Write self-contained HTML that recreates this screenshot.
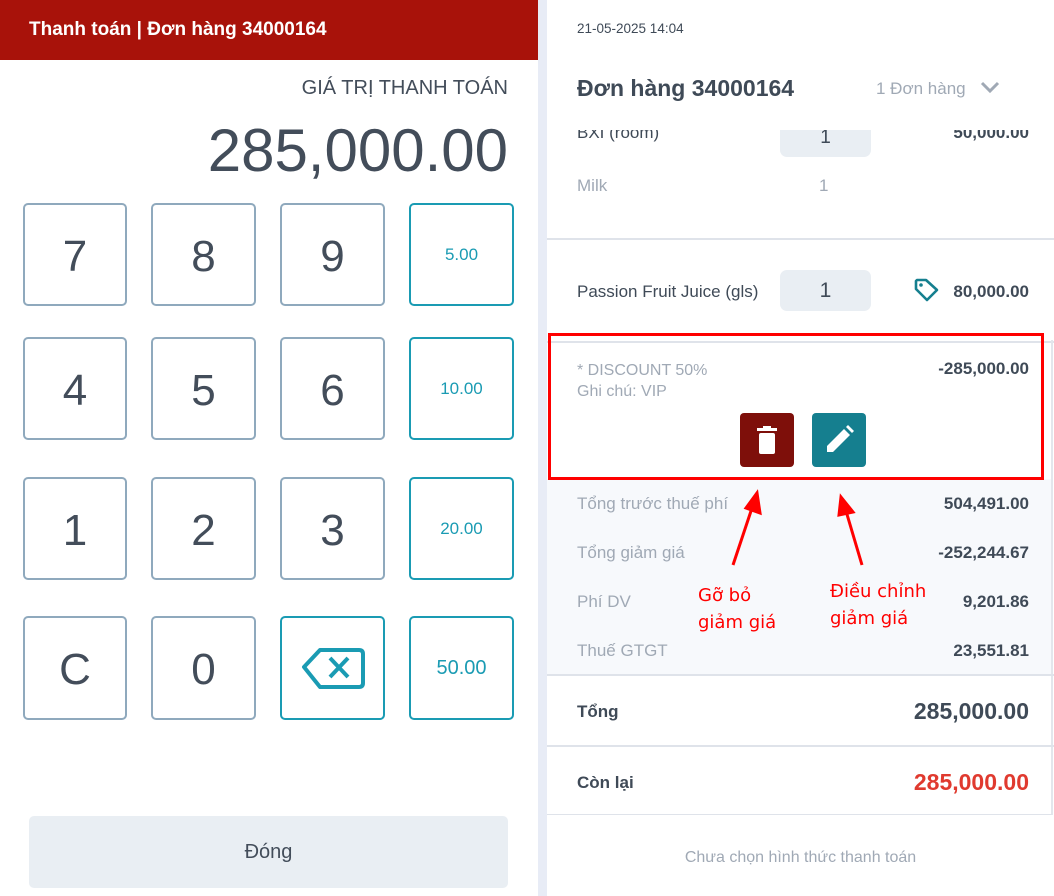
<!DOCTYPE html>
<html><head><meta charset="utf-8"><style>
*{margin:0;padding:0;box-sizing:border-box}
body{width:1054px;height:896px;position:relative;background:#e8ecf6;font-family:"Liberation Sans","DejaVu Sans",sans-serif;overflow:hidden;color:#3f4a57}
.a{position:absolute}
.k{position:absolute;border:2px solid #8fa9bd;border-radius:5px;background:#fff;display:flex;align-items:center;justify-content:center;font-size:44px;color:#434d5a;padding-top:4px}
.t{border-color:#1a9bb3;color:#1a9bb3;font-size:17px;padding-top:0}
.r{white-space:nowrap}
</style></head><body>
<div class="a" style="left:0;top:0;width:538px;height:896px;background:#fff"></div>
<div class="a" style="left:0;top:0;width:538px;height:60px;background:#a8120a"></div>
<div class="a r" style="left:29px;top:19px;color:#fff;font-weight:bold;font-size:19px">Thanh toán | Đơn hàng 34000164</div>
<div class="a r" style="right:546px;top:77px;font-size:20px;color:#434d5a">GIÁ TRỊ THANH TOÁN</div>
<div class="a r" style="right:546px;top:116px;font-size:60px;color:#434d5a">285,000.00</div>

<div class="k" style="left:23px;top:203px;width:104px;height:103px">7</div>
<div class="k" style="left:151px;top:203px;width:105px;height:103px">8</div>
<div class="k" style="left:280px;top:203px;width:105px;height:103px">9</div>
<div class="k t" style="left:409px;top:203px;width:105px;height:103px">5.00</div>
<div class="k" style="left:23px;top:337px;width:104px;height:103px">4</div>
<div class="k" style="left:151px;top:337px;width:105px;height:103px">5</div>
<div class="k" style="left:280px;top:337px;width:105px;height:103px">6</div>
<div class="k t" style="left:409px;top:337px;width:105px;height:103px">10.00</div>
<div class="k" style="left:23px;top:477px;width:104px;height:103px">1</div>
<div class="k" style="left:151px;top:477px;width:105px;height:103px">2</div>
<div class="k" style="left:280px;top:477px;width:105px;height:103px">3</div>
<div class="k t" style="left:409px;top:477px;width:105px;height:103px">20.00</div>
<div class="k" style="left:23px;top:616px;width:104px;height:104px">C</div>
<div class="k" style="left:151px;top:616px;width:105px;height:104px">0</div>
<div class="k t" style="left:280px;top:616px;width:105px;height:104px"><svg width="64" height="48" viewBox="0 0 64 48"><path d="M3 23 L19 6 H58 Q62 6 62 10 V39 Q62 43 58 43 H19 Z" fill="none" stroke="#1a9bb3" stroke-width="4" stroke-linejoin="round"/><path d="M29 14 L47 33 M47 14 L29 33" stroke="#1a9bb3" stroke-width="4"/></svg></div>
<div class="k t" style="left:409px;top:616px;width:105px;height:104px;font-size:20px">50.00</div>
<div class="a" style="left:29px;top:816px;width:479px;height:72px;background:#e9eef3;border-radius:5px;display:flex;align-items:center;justify-content:center;font-size:20px;color:#434d5a">Đóng</div>

<div class="a" style="left:547px;top:0;width:507px;height:896px;background:#fff"></div>
<div class="a r" style="left:577px;top:21px;font-size:13.5px;color:#3f4a57">21-05-2025 14:04</div>
<div class="a r" style="left:577px;top:75px;font-size:23px;font-weight:bold;color:#3f4a57">Đơn hàng 34000164</div>
<div class="a r" style="left:876px;top:79px;font-size:17px;color:#a0a9b5">1 Đơn hàng</div>
<svg class="a" style="left:980px;top:80px" width="20" height="14"><path d="M2 3 L10 11 L18 3" fill="none" stroke="#a0a9b5" stroke-width="3"/></svg>

<div class="a" style="left:547px;top:130px;width:507px;height:109px;overflow:hidden">
 <div class="a r" style="left:30px;top:-7px;font-size:17px">BXI (room)</div>
 <div class="a" style="left:233px;top:-12px;width:91px;height:39px;background:#e9eef3;border-radius:7px;text-align:center;font-size:19px;line-height:39px">1</div>
 <div class="a r" style="right:25px;top:-7px;font-size:17px;font-weight:bold">50,000.00</div>
 <div class="a r" style="left:30px;top:46px;font-size:17px;color:#a0a9b5">Milk</div>
 <div class="a r" style="left:272px;top:46px;font-size:17px;color:#a0a9b5">1</div>
</div>
<div class="a" style="left:547px;top:238px;width:507px;height:2px;background:#dfe3ea"></div>
<div class="a r" style="left:577px;top:282px;font-size:17px">Passion Fruit Juice (gls)</div>
<div class="a" style="left:780px;top:270px;width:91px;height:41px;background:#e9eef3;border-radius:7px;text-align:center;font-size:21px;line-height:41px">1</div>
<svg class="a" style="left:914px;top:278px" width="26" height="24" viewBox="0 0 26 24"><path d="M2 3 V11 L13 22 L23 12 L12 2 H3 Z" fill="none" stroke="#157f8f" stroke-width="2.6" stroke-linejoin="round"/><circle cx="7" cy="7" r="1.8" fill="#157f8f"/></svg>
<div class="a r" style="right:25px;top:282px;font-size:17px;font-weight:bold">80,000.00</div>

<div class="a" style="left:547px;top:341px;width:507px;height:2px;background:#dfe3ea"></div>
<div class="a r" style="left:577px;top:360px;font-size:16px;color:#a0a9b5;line-height:21px">* DISCOUNT 50%<br>Ghi chú: VIP</div>
<div class="a r" style="right:25px;top:359px;font-size:17px;font-weight:bold">-285,000.00</div>
<div class="a" style="left:740px;top:413px;width:54px;height:54px;background:#7e0f0a;border-radius:4px"><svg width="54" height="54"><rect x="19" y="20" width="16" height="21" rx="2" fill="#fff"/><rect x="17" y="15" width="20" height="3" fill="#fff"/><rect x="23" y="13" width="8" height="3" fill="#fff"/></svg></div>
<div class="a" style="left:812px;top:413px;width:54px;height:54px;background:#157f8f;border-radius:4px"><svg width="54" height="54"><path d="M15 39 L15 33 L32 16 L38 22 L21 39 Z" fill="#fff"/><path d="M34 14 L36 12 L42 18 L40 20 Z" fill="#fff"/></svg></div>

<div class="a" style="left:547px;top:479px;width:505px;height:196px;background:#f7f9fc"></div>
<div class="a" style="left:1051px;top:340px;width:2px;height:475px;background:#e3e6ec"></div>
<div class="a r" style="left:577px;top:494px;font-size:17px;color:#a0a9b5">Tổng trước thuế phí</div>
<div class="a r" style="right:25px;top:494px;font-size:17px;font-weight:bold">504,491.00</div>
<div class="a r" style="left:577px;top:543px;font-size:17px;color:#a0a9b5">Tổng giảm giá</div>
<div class="a r" style="right:25px;top:543px;font-size:17px;font-weight:bold">-252,244.67</div>
<div class="a r" style="left:577px;top:592px;font-size:17px;color:#a0a9b5">Phí DV</div>
<div class="a r" style="right:25px;top:592px;font-size:17px;font-weight:bold">9,201.86</div>
<div class="a r" style="left:577px;top:641px;font-size:17px;color:#a0a9b5">Thuế GTGT</div>
<div class="a r" style="right:25px;top:641px;font-size:17px;font-weight:bold">23,551.81</div>
<div class="a" style="left:547px;top:674px;width:507px;height:2px;background:#dfe3ea"></div>
<div class="a r" style="left:577px;top:702px;font-size:17px;font-weight:bold">Tổng</div>
<div class="a r" style="right:25px;top:698px;font-size:23px;font-weight:bold">285,000.00</div>
<div class="a" style="left:547px;top:745px;width:507px;height:2px;background:#dfe3ea"></div>
<div class="a r" style="left:577px;top:773px;font-size:17px;font-weight:bold">Còn lại</div>
<div class="a r" style="right:25px;top:769px;font-size:23px;font-weight:bold;color:#e03a2f">285,000.00</div>
<div class="a" style="left:547px;top:814px;width:505px;height:1px;background:#dfe3ea"></div>
<div class="a r" style="left:547px;width:507px;text-align:center;top:849px;font-size:16px;color:#a0a9b5">Chưa chọn hình thức thanh toán</div>

<div class="a" style="left:548px;top:333px;width:496px;height:147px;border:3px solid #f00"></div>
<svg class="a" style="left:0;top:0" width="1054" height="896"><g stroke="#f00" stroke-width="3" fill="#f00"><line x1="733" y1="565" x2="752" y2="508"/><path d="M757 493 L760 513 L746 508 Z"/><line x1="862" y1="565" x2="846" y2="511"/><path d="M841 497 L853 512 L839 515 Z"/></g></svg>
<div class="a r" style="left:698px;top:582px;font-size:18px;line-height:27px;color:#f00;font-family:'DejaVu Sans',sans-serif">Gỡ bỏ<br>giảm giá</div>
<div class="a r" style="left:830px;top:578px;font-size:18px;line-height:27px;color:#f00;font-family:'DejaVu Sans',sans-serif">Điều chỉnh<br>giảm giá</div>
</body></html>
